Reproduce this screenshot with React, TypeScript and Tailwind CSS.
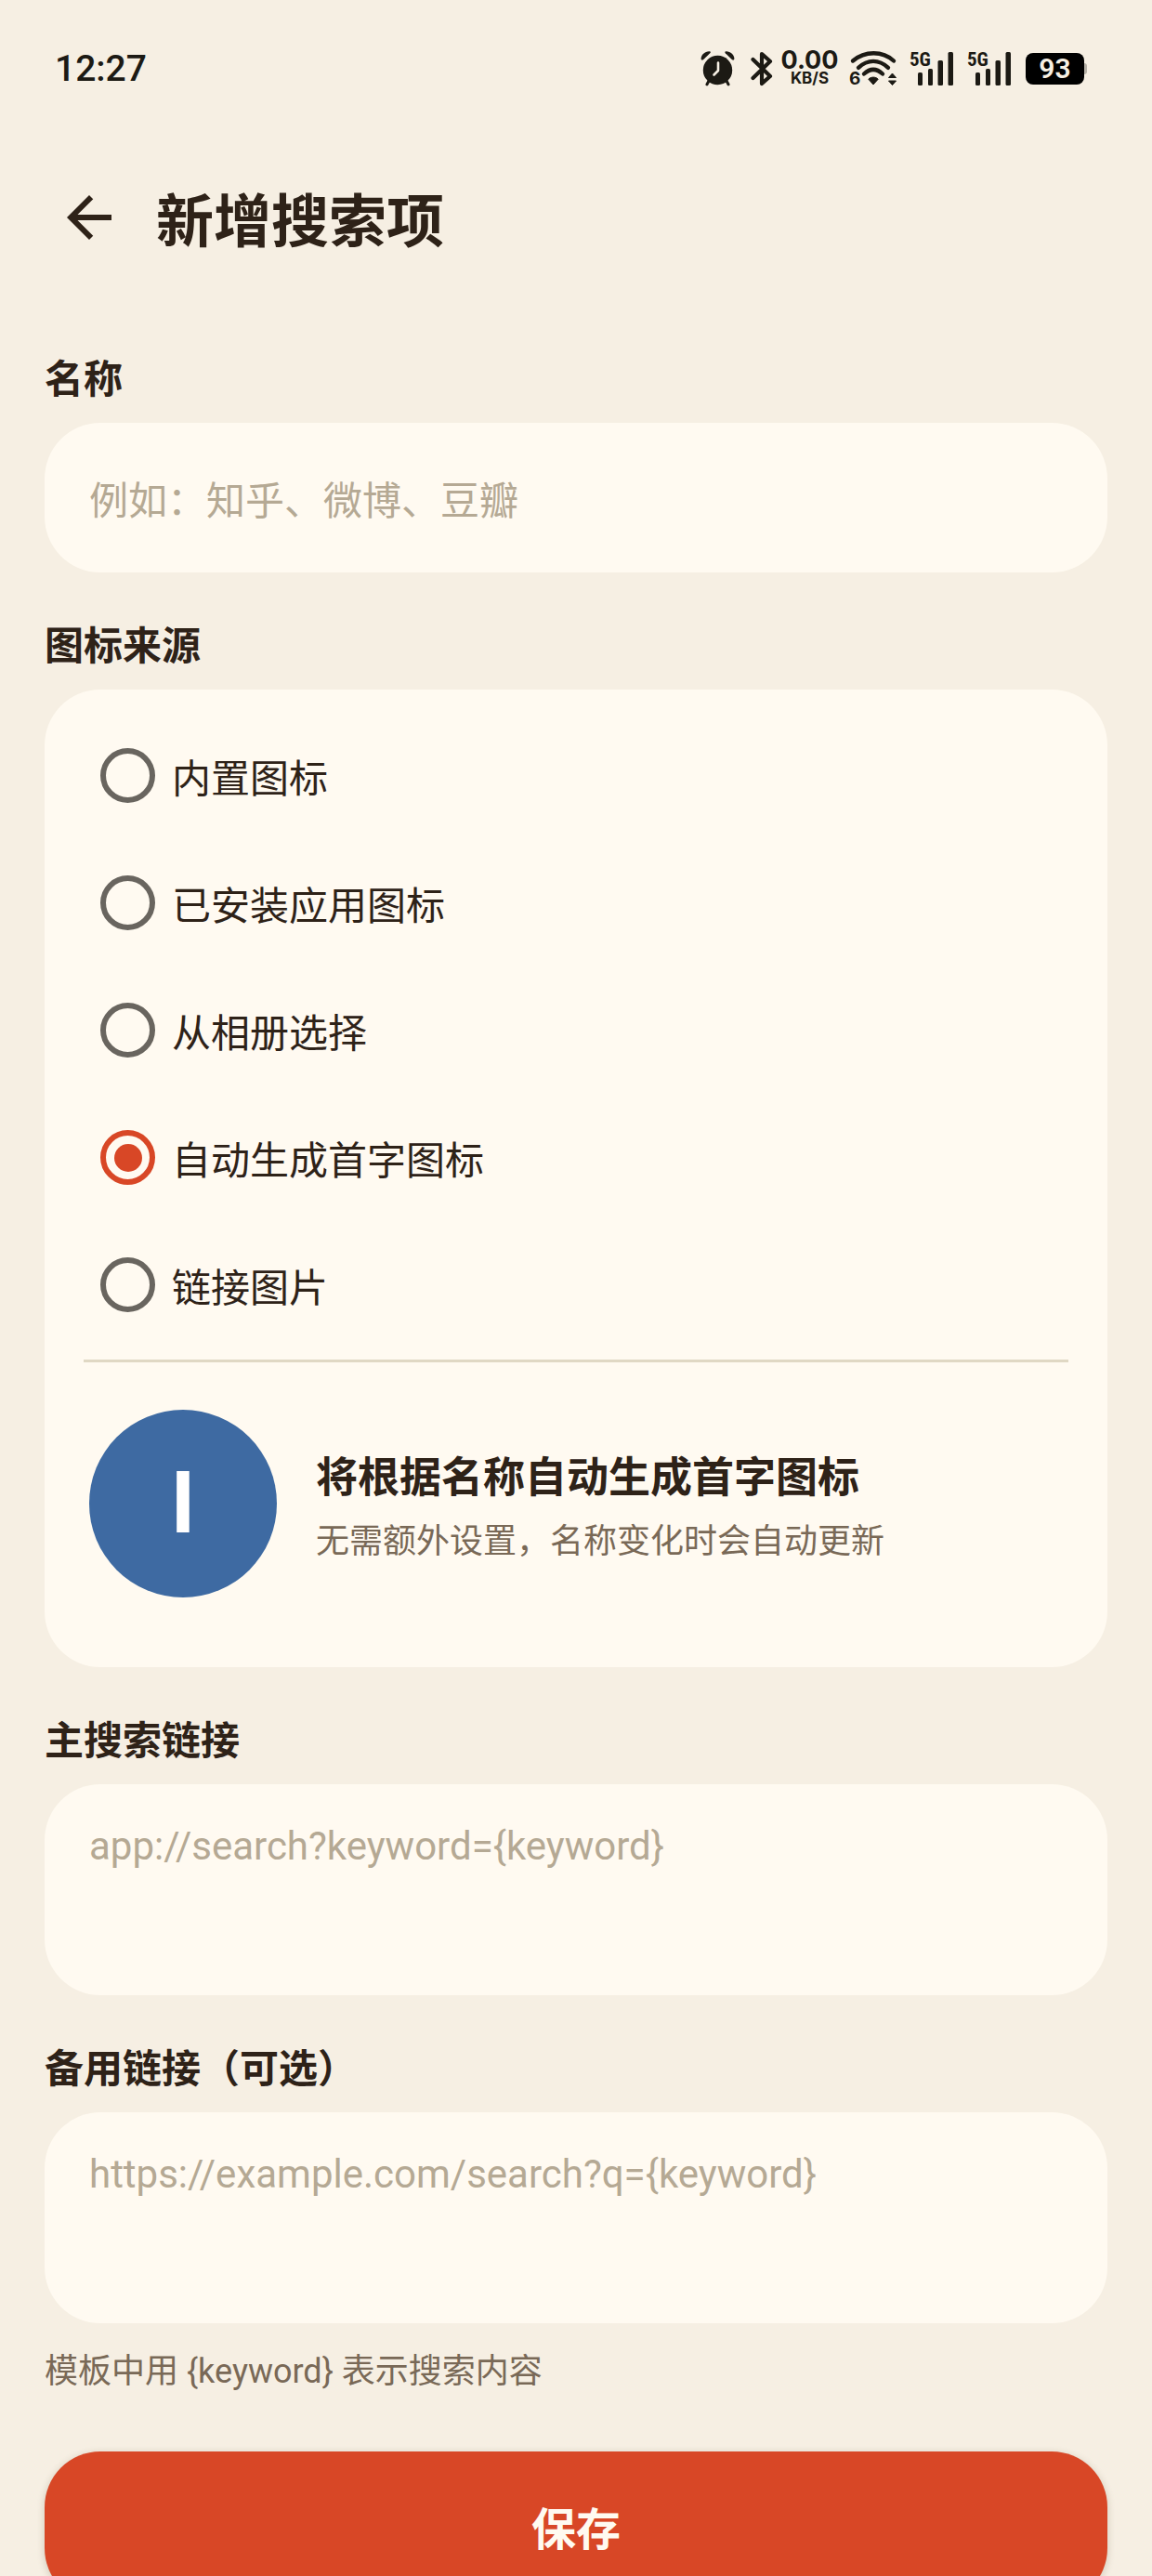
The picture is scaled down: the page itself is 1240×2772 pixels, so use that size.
import { useState } from "react";

const ICON_SOURCES = [
  { value: "builtin", label: "内置图标" },
  { value: "installed", label: "已安装应用图标" },
  { value: "album", label: "从相册选择" },
  { value: "initial", label: "自动生成首字图标" },
  { value: "link", label: "链接图片" },
];

function AlarmIcon() {
  return (
    <svg className="h-[38px] w-[37px]" viewBox="0 0 37 38" fill="none" aria-hidden="true">
      <path d="M0.6 8.6C0.4 4 5 0 9.8 0.3Q11.6 0.8 10.2 2.2L3 9.2Q1.2 10.4 0.6 8.6Z" fill="#1c1a14" />
      <path d="M36.4 8.6C36.6 4 32 0 27.2 0.3Q25.4 0.8 26.8 2.2L34 9.2Q35.8 10.4 36.4 8.6Z" fill="#1c1a14" />
      <circle cx="18.5" cy="20.5" r="15.7" fill="#1c1a14" />
      <path d="M9 32L7 35.8M28 32L30 35.8" stroke="#1c1a14" strokeWidth="3" strokeLinecap="round" />
      <path d="M19 12.5V21L14.5 25.5" stroke="#f6efe3" strokeWidth="2.6" strokeLinecap="round" strokeLinejoin="round" />
    </svg>
  );
}

function BluetoothIcon() {
  return (
    <svg className="h-[38px] w-[24px]" viewBox="0 0 24 38" fill="none" aria-hidden="true">
      <path d="M2.5 9L21 27L12 35V3L21 11L2.5 29" stroke="#1c1a14" strokeWidth="4.2" strokeLinecap="round" strokeLinejoin="round" />
    </svg>
  );
}

function WifiIcon() {
  return (
    <div className="relative h-[38px] w-[52px]">
      <svg className="h-[38px] w-[52px]" viewBox="0 0 52 38" fill="none" aria-hidden="true">
        <path d="M4 10.5C17 -0.5 36 -0.5 48 10.5" stroke="#1c1a14" strokeWidth="4.4" strokeLinecap="round" />
        <path d="M10 17.8C20 8.5 32 8.5 42 17.8" stroke="#1c1a14" strokeWidth="4.4" strokeLinecap="round" />
        <path d="M16 24.5C22.5 18.5 29.5 18.5 36 24.5" stroke="#1c1a14" strokeWidth="4.4" strokeLinecap="round" />
        <path d="M20.8 30.2C23.5 27.4 28.5 27.4 31.2 30.2L26 36Z" fill="#1c1a14" stroke="#1c1a14" strokeLinejoin="round" />
        <path d="M42.5 28.5L46.5 24L50.5 28.5ZM42.5 32L46.5 36.5L50.5 32Z" fill="#1c1a14" stroke="#1c1a14" strokeLinejoin="round" />
      </svg>
      <span className="absolute bottom-0 left-0 font-['Inter',sans-serif] text-[19px] leading-[16px] font-bold">6</span>
    </div>
  );
}

function SignalIcon() {
  return (
    <div className="relative h-[38px] w-[48px]">
      <span className="absolute top-0 left-0 font-['Roboto_Condensed','Liberation_Sans_Narrow','Roboto',sans-serif] text-[21px] leading-[18px] font-bold">
        5G
      </span>
      <svg className="h-[38px] w-[48px]" viewBox="0 0 48 38" fill="#1c1a14" aria-hidden="true">
        <rect x="9" y="23" width="5" height="14" rx="1.5" />
        <rect x="20" y="19" width="5" height="18" rx="1.5" />
        <rect x="30.5" y="10" width="5.5" height="27" rx="1.5" />
        <rect x="41.5" y="1" width="5.5" height="36" rx="1.5" />
      </svg>
    </div>
  );
}

function StatusBar() {
  return (
    <div className="flex h-[148px] shrink-0 items-center justify-between pr-[70px] pl-[59px] text-[#1c1a14]">
      <span className="text-[39px] leading-[48px] font-medium">12:27</span>
      <div className="flex items-center">
        <AlarmIcon />
        <div className="ml-[17px]">
          <BluetoothIcon />
        </div>
        <div className="ml-[9px] flex w-[61px] flex-col items-center font-['Inter',sans-serif] font-bold">
          <span className="text-[27px] leading-[20px]">0.00</span>
          <span className="text-[17px] leading-[18px]">KB/S</span>
        </div>
        <div className="ml-[12px]">
          <WifiIcon />
        </div>
        <div className="ml-[13px] flex gap-[14px]">
          <SignalIcon />
          <SignalIcon />
        </div>
        <div className="ml-[15px] flex items-center">
          <span className="flex h-[34px] w-[63px] items-center justify-center rounded-[8px] bg-black text-[30px] leading-[34px] font-semibold text-[#f6efe3]">
            93
          </span>
          <span className="h-[12px] w-[3px] rounded-r-[3px] bg-[#b5b0a6]" />
        </div>
      </div>
    </div>
  );
}

const cjk = "font-['Noto_Sans_CJK_SC',sans-serif]";
const sectionLabel = `${cjk} block text-[42px] leading-[52px] font-bold`;
const field =
  "mt-6 block w-full resize-none rounded-[60px] bg-[#fffaf1] px-12 text-[42px] leading-[56px] outline-none placeholder:text-[#b5a994]";

export default function App() {
  const [name, setName] = useState("");
  const [source, setSource] = useState("initial");

  return (
    <div className="flex h-screen flex-col overflow-hidden bg-[#f6efe3] font-['Roboto','Noto_Sans_CJK_SC',sans-serif] text-[#2e2218]">
      <StatusBar />
      <header className="flex h-[172px] shrink-0 items-center px-[60px]">
        <button type="button" aria-label="返回" className="size-[72px]">
          <svg className="size-[72px]" viewBox="0 0 24 24" fill="currentColor" aria-hidden="true">
            <path d="M20 11H7.83l5.59-5.59L12 4l-8 8 8 8 1.41-1.41L7.83 13H20v-2z" />
          </svg>
        </button>
        <h1 className={`${cjk} ml-9 text-[62px] leading-[80px] font-bold`}>新增搜索项</h1>
      </header>

      <form
        className="flex min-h-0 flex-1 flex-col gap-[50px] overflow-y-auto px-12 pt-[59px] pb-12 [scrollbar-width:none]"
        onSubmit={(e) => e.preventDefault()}
      >
        <div>
          <label htmlFor="name" className={sectionLabel}>名称</label>
          <input
            id="name"
            type="text"
            value={name}
            onChange={(e) => setName(e.target.value)}
            placeholder="例如：知乎、微博、豆瓣"
            className={`${field} ${cjk} h-[161px]`}
          />
        </div>

        <fieldset>
          <legend className={sectionLabel}>图标来源</legend>
          <div className="mt-6 rounded-[60px] bg-[#fffaf1] px-[42px] pt-6 pb-[75px]">
            {ICON_SOURCES.map((item) => (
              <label
                key={item.value}
                className={`${cjk} flex h-[137px] items-center gap-[18px] pl-[18px] text-[42px] leading-[56px]`}
              >
                <input
                  type="radio"
                  name="source"
                  value={item.value}
                  checked={source === item.value}
                  onChange={() => setSource(item.value)}
                  className="grid size-[59px] shrink-0 appearance-none place-content-center rounded-full border-[6px] border-[#69655f] before:size-[30px] before:rounded-full checked:border-[#d84726] checked:before:bg-[#d84726]"
                />
                {item.label}
              </label>
            ))}
            <hr className="mt-3 border-t-[3px] border-[#e0d8c4]" />
            <div className="mt-[51px] flex items-center gap-[42px] px-1.5">
              <div className="flex size-[202px] shrink-0 items-center justify-center rounded-full bg-[#3e6aa2] text-[92px] leading-none font-bold text-white">
                {name ? name[0] : "I"}
              </div>
              <div className={`${cjk} pt-1.5`}>
                <p className="text-[45px] leading-[68px] font-bold">将根据名称自动生成首字图标</p>
                <p className="text-[36px] leading-[68px] text-[#796957]">无需额外设置，名称变化时会自动更新</p>
              </div>
            </div>
          </div>
        </fieldset>

        <div>
          <label htmlFor="main-link" className={sectionLabel}>主搜索链接</label>
          <textarea id="main-link" placeholder="app://search?keyword={keyword}" className={`${field} h-[227px] pt-[39px]`} />
        </div>

        <div>
          <label htmlFor="backup-link" className={sectionLabel}>备用链接（可选）</label>
          <textarea
            id="backup-link"
            placeholder="https://example.com/search?q={keyword}"
            className={`${field} h-[227px] pt-[39px]`}
          />
          <p className="mt-7 text-[36px] leading-[48px] text-[#796957]">模板中用 {"{keyword}"} 表示搜索内容</p>
          <button
            type="submit"
            className={`${cjk} mt-[62px] h-[164px] w-full rounded-[60px] bg-[#d84726] pb-1 text-[48px] leading-[64px] font-bold text-[#fffaf1] shadow-[0_2px_8px_rgba(60,50,20,0.2)]`}
          >
            保存
          </button>
        </div>
      </form>
    </div>
  );
}
